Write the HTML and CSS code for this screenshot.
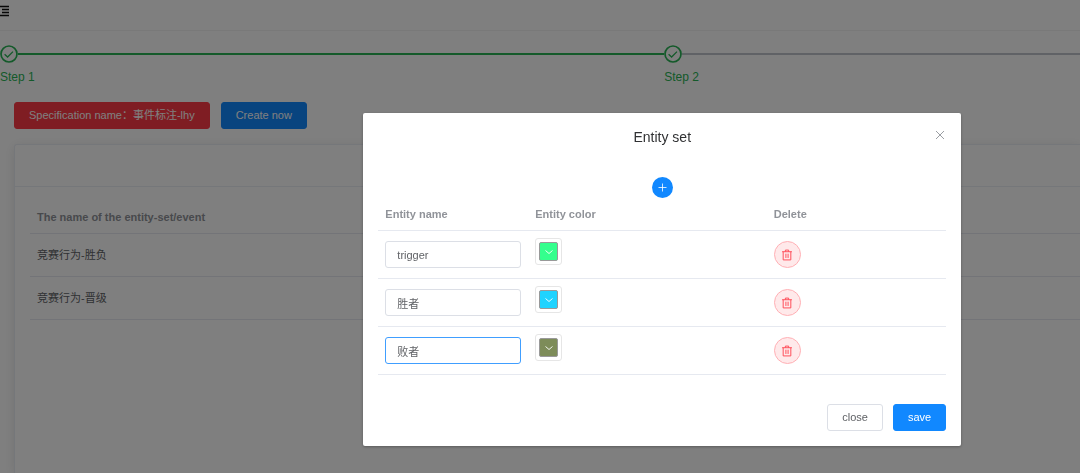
FILE: index.html
```html
<!DOCTYPE html>
<html lang="zh-CN">
<head>
    <meta charset="UTF-8">
    <meta name="viewport" content="width=device-width, initial-scale=1.0">
    <title>Entity set</title>
    <link rel="stylesheet" href="styles.css">
</head>
<body>
    <!-- shared icons -->
    <svg class="sprite" aria-hidden="true">
        <symbol id="icon-check" viewBox="0 0 18 18">
            <circle cx="9" cy="9" r="8" fill="none" stroke="currentColor" stroke-width="1.7"/>
            <path d="M4.6 9.2l3 2.8 5.4-5.4" fill="none" stroke="currentColor" stroke-width="1.3"/>
        </symbol>
        <symbol id="icon-down" viewBox="0 0 10 10">
            <path d="M1.5 3.5l3.5 3 3.5-3" fill="none" stroke="currentColor" stroke-width="0.9"/>
        </symbol>
        <symbol id="icon-trash" viewBox="0 0 11 11">
            <path d="M1 2.5h9M2 2.5v7.5h7v-7.5M4 2.5v-1.5h3v1.5M4.5 4.3v3.9M6.5 4.3v3.9" fill="none" stroke="currentColor" stroke-width="0.9"/>
        </symbol>
    </svg>

    <div class="page">
        <header class="topbar">
            <button class="fold" aria-label="Toggle menu">
                <svg width="10" height="12" viewBox="0 0 10 12"><path d="M0 1.5h9M2 4.5h7M2 7.5h7M0 10.5h9" stroke="currentColor" stroke-width="1.3"/></svg>
            </button>
        </header>

        <ol class="steps">
            <li class="step step-first">
                <div class="step-head"><svg class="step-icon"><use href="#icon-check"/></svg><span class="step-line"></span></div>
                <div class="step-title">Step 1</div>
            </li>
            <li class="step">
                <div class="step-head"><svg class="step-icon"><use href="#icon-check"/></svg><span class="step-line step-line-wait"></span></div>
                <div class="step-title">Step 2</div>
            </li>
        </ol>

        <div class="actions">
            <button class="btn btn-danger">Specification name：事件标注-lhy</button>
            <button class="btn btn-primary">Create now</button>
        </div>

        <section class="card">
            <div class="card-header"></div>
            <div class="card-body">
                <table class="table">
                    <thead>
                        <tr><th>The name of the entity-set/event</th></tr>
                    </thead>
                    <tbody>
                        <tr><td>竞赛行为-胜负</td></tr>
                        <tr><td>竞赛行为-晋级</td></tr>
                    </tbody>
                </table>
            </div>
        </section>
    </div>

    <div class="overlay">
        <div class="dialog" role="dialog" aria-modal="true" aria-labelledby="dialog-title">
            <div class="dialog-header">
                <h2 id="dialog-title">Entity set</h2>
                <button class="dialog-close" aria-label="Close dialog">
                    <svg width="10" height="10" viewBox="0 0 10 10"><path d="M1 1l8 8M9 1l-8 8" stroke="currentColor" stroke-width="0.9"/></svg>
                </button>
            </div>

            <div class="dialog-body">
                <button class="add" aria-label="Add entity">
                    <svg width="9" height="9" viewBox="0 0 9 9"><path d="M4.5 0.5v8M0.5 4.5h8" stroke="currentColor" stroke-width="0.8"/></svg>
                </button>
                <table class="table entity-table">
                    <thead>
                        <tr>
                            <th class="col-name">Entity name</th>
                            <th class="col-color">Entity color</th>
                            <th>Delete</th>
                        </tr>
                    </thead>
                    <tbody>
                        <tr>
                            <td><input class="input" type="text" aria-label="Entity name" value="trigger"></td>
                            <td class="color-cell"><button class="picker" aria-label="Entity color"><span class="swatch green"><svg width="10" height="10"><use href="#icon-down"/></svg></span></button></td>
                            <td><button class="delete" aria-label="Delete"><svg width="12" height="12"><use href="#icon-trash"/></svg></button></td>
                        </tr>
                        <tr>
                            <td><input class="input" type="text" aria-label="Entity name" value="胜者"></td>
                            <td class="color-cell"><button class="picker" aria-label="Entity color"><span class="swatch cyan"><svg width="10" height="10"><use href="#icon-down"/></svg></span></button></td>
                            <td><button class="delete" aria-label="Delete"><svg width="12" height="12"><use href="#icon-trash"/></svg></button></td>
                        </tr>
                        <tr>
                            <td><input class="input active" type="text" aria-label="Entity name" value="败者"></td>
                            <td class="color-cell"><button class="picker" aria-label="Entity color"><span class="swatch olive"><svg width="10" height="10"><use href="#icon-down"/></svg></span></button></td>
                            <td><button class="delete" aria-label="Delete"><svg width="12" height="12"><use href="#icon-trash"/></svg></button></td>
                        </tr>
                    </tbody>
                </table>
            </div>

            <div class="dialog-footer">
                <button class="btn">close</button>
                <button class="btn btn-primary">save</button>
            </div>
        </div>
    </div>
</body>
</html>
```
FILE: styles.css
```css
* {
    box-sizing: border-box;
}

body {
    margin: 0;
    overflow: hidden;
    background: #fff;
    color: #606266;
    font-family: "Liberation Sans", Arial, "Noto Sans CJK SC", sans-serif;
    font-size: 11px;
    line-height: 17px;
}

button {
    padding: 0;
    border: none;
    background: none;
    font: inherit;
    cursor: pointer;
}

svg {
    display: block;
}

.sprite {
    display: none;
}

/* page behind the dialog */
.page {
    display: flex;
    flex-direction: column;
    min-height: 100vh;
}

.topbar {
    height: 31px;
    padding-top: 5px;
    border-bottom: 1px solid #f2f2f2;
}

.fold {
    color: #111;
}

.steps {
    display: flex;
    margin: 0;
    padding: 14px 0 0;
    list-style: none;
    color: #28b455;
    font-size: 12px;
}

.step {
    flex: 1;
}

.step-first {
    flex: 0 0 61.5%;
}

.step-head {
    display: flex;
    align-items: center;
}

.step-icon {
    width: 18px;
    height: 18px;
}

.step-line {
    flex: 1;
    height: 2px;
    background: #28b455;
}

.step-line-wait {
    background: #c0c4cc;
}

.step-title {
    margin-top: 6px;
}

.actions {
    display: flex;
    gap: 11px;
    padding: 16px 14px 15px;
}

.btn {
    height: 27px;
    padding: 0 14px;
    border: 1px solid #dcdfe6;
    border-radius: 3px;
    background: #fff;
    color: #606266;
}

.btn-primary {
    border-color: #1188ff;
    background: #1188ff;
    color: #fff;
}

.btn-danger {
    border-color: #ff3a46;
    background: #ff3a46;
    color: #fff;
}

.card {
    flex: 1;
    margin-left: 14px;
    border: 1px solid #ebeef5;
    border-width: 1px 0 0 1px;
    border-radius: 3px 0 0 0;
    box-shadow: 0 2px 12px rgba(0, 0, 0, 0.1);
}

.card-header {
    height: 42px;
    border-bottom: 1px solid #ebeef5;
}

.card-body {
    padding: 15px 0 15px 15px;
}

.table {
    width: 100%;
    border-collapse: separate;
    border-spacing: 0;
}

.table th,
.table td {
    height: 43px;
    padding: 0 7px;
    border-bottom: 1px solid #e6e9f0;
    text-align: left;
}

.table th {
    height: 32px;
    color: #909399;
}

/* dialog */
.overlay {
    position: fixed;
    inset: 0;
    padding: 113px 11% 0 0;
    background: rgba(0, 0, 0, 0.5);
}

.dialog {
    width: 62.2%;
    margin-left: auto;
    border-radius: 2px;
    background: #fff;
    box-shadow: 0 1px 3px rgba(0, 0, 0, 0.3);
}

.dialog-header {
    display: grid;
    grid-template-columns: 1fr auto 1fr;
    padding: 15px 15px 7px;
}

.dialog-header h2 {
    grid-column: 2;
    margin: 0;
    color: #303133;
    font-size: 14px;
    font-weight: normal;
    line-height: 19px;
}

.dialog-close {
    align-self: start;
    justify-self: end;
    padding: 2px 1px;
    color: #909399;
}

.dialog-body {
    padding: 23px 15px;
}

.add {
    display: flex;
    align-items: center;
    justify-content: center;
    width: 21px;
    height: 21px;
    margin: 0 auto;
    border-radius: 50%;
    background: #1188ff;
    color: #fff;
}

.entity-table {
    table-layout: fixed;
}

.entity-table th {
    height: 33px;
}

.entity-table td {
    height: 48px;
}

.col-name {
    width: 26.4%;
}

.col-color {
    width: 42%;
}

.input {
    display: block;
    width: 100%;
    height: 27px;
    padding: 0 11px;
    border: 1px solid #dcdfe6;
    border-radius: 3px;
    background: #fff;
    color: #606266;
    font: inherit;
    outline: none;
}

.input.active,
.input:focus {
    border-color: #409eff;
}

.table .color-cell {
    padding-top: 7px;
    vertical-align: top;
}

.picker {
    display: block;
    width: 27px;
    height: 27px;
    padding: 3px;
    border: 1px solid #e6e6e6;
    border-radius: 3px;
}

.swatch {
    display: flex;
    align-items: center;
    justify-content: center;
    height: 19px;
    border: 1px solid #999;
    border-radius: 2px;
    color: #fff;
}

.green {
    background: #34ff8d;
}

.cyan {
    background: #1fd3ff;
}

.olive {
    background: #7d8c59;
}

.delete {
    display: flex;
    align-items: center;
    justify-content: center;
    width: 27px;
    height: 27px;
    border: 1px solid #ffb0b5;
    border-radius: 50%;
    background: #ffe9ea;
    color: #ff4d58;
}

.dialog-footer {
    display: flex;
    justify-content: flex-end;
    gap: 10px;
    padding: 6px 15px 15px;
}
```
